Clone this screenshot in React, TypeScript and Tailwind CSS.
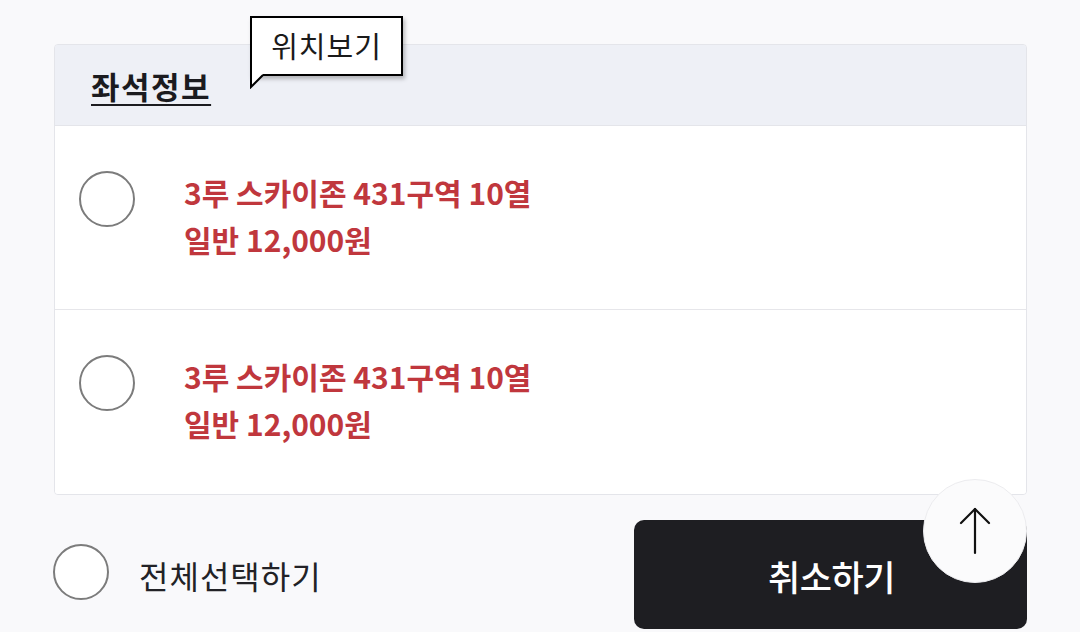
import React from "react";

const font = { fontFamily: '"Noto Sans CJK KR", "Noto Sans", sans-serif' };

function Radio({ className = "" }: { className?: string }) {
  return <div className={`w-[56px] h-[56px] rounded-full border-2 border-[#7c7c7c] bg-white shrink-0 ${className}`} />;
}

function SeatRow({ last }: { last?: boolean }) {
  return (
    <div className={`flex items-start h-[184px] pt-[45px] pl-[24px] bg-white ${last ? "" : "border-b border-[#e6e6ea]"}`}>
      <Radio />
      <div className="ml-[49px] -mt-[2px] text-[30px] leading-[47px] font-bold text-[#c0373d]">
        <div>3루 스카이존 431구역 10열</div>
        <div>일반 12,000원</div>
      </div>
    </div>
  );
}

export default function App() {
  return (
    <div className="relative w-[1080px] h-[632px] bg-[#f9f9fb] overflow-hidden" style={font}>
      <div className="pl-[54px] pr-[53px] pt-[44px]">
        <div className="border border-[#e4e5ea] rounded-[4px] overflow-hidden">
          <div className="h-[81px] bg-[#eef0f6] pl-[36px] pt-[22px] border-b border-[#e4e5ea]">
            <span className="text-[31px] font-bold text-[#1b1b1f] tracking-[1.5px] underline underline-offset-[5px] decoration-[2px] leading-[38px]">좌석정보</span>
          </div>
          <SeatRow />
          <SeatRow last />
        </div>
        <div className="flex items-center justify-between mt-[25px] -ml-[1px]">
          <div className="flex items-center">
            <Radio className="-mt-[6px]" />
            <span className="ml-[30px] text-[32px] text-[#222226] tracking-[1px]">전체선택하기</span>
          </div>
          <button className="w-[393px] h-[109px] rounded-[10px] bg-[#1e1e22] text-white text-[35px] font-medium tracking-[-0.5px] pt-[4px] pl-[2px]">
            취소하기
          </button>
        </div>
      </div>

      {/* tooltip */}
      <div className="absolute left-[250px] top-[16px]">
        <div className="w-[153px] h-[60px] border-2 border-black bg-white shadow-[2px_3px_4px_rgba(0,0,0,0.25)] flex items-center justify-center text-[29px] text-[#1a1a1a] tracking-[1px]">
          위치보기
        </div>
        <svg className="absolute left-0 top-[57px]" width="16" height="16" viewBox="0 0 16 16">
          <polygon points="1,0 14,0 2,14" fill="white" />
          <polyline points="1,0 1,14 13,2" fill="none" stroke="black" strokeWidth="2" />
        </svg>
      </div>

      {/* scroll top */}
      <div className="absolute left-[923px] top-[479px] w-[104px] h-[104px] rounded-full bg-[#fbfbfc] border border-[#ececef] flex items-center justify-center">
        <svg width="36" height="50" viewBox="0 0 36 50" fill="none" stroke="#111" strokeWidth="2.2" strokeLinecap="round" strokeLinejoin="round">
          <line x1="18" y1="3" x2="18" y2="47" />
          <polyline points="4,17 18,3 32,17" />
        </svg>
      </div>
    </div>
  );
}
